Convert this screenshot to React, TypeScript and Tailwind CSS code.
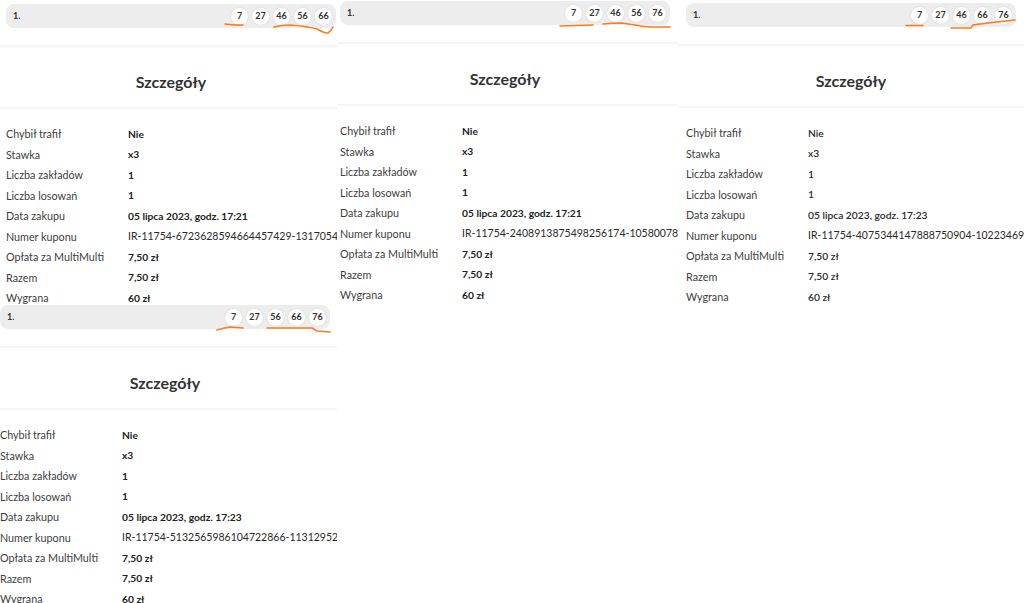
import React from 'react';

type PanelProps = {
  top: number;
  left: number;
  balls: number[];
  date: string;
  coupon: string;
  light?: boolean;
};

const font = { fontFamily: 'Lato, "Noto Sans", sans-serif' };

const Ball: React.FC<{ n: number }> = ({ n }) => (
  <div className="flex h-[17px] w-[17px] items-center justify-center rounded-full bg-white text-[9px] font-bold text-[#333] shadow-[0_0_2px_rgba(0,0,0,0.12)]">
    {n}
  </div>
);

const Panel: React.FC<PanelProps> = ({ top, left, balls, date, coupon, light }) => {
  const rows: [string, string, boolean][] = [
    ['Chybił trafił', 'Nie', true],
    ['Stawka', 'x3', true],
    ['Liczba zakładów', '1', true],
    ['Liczba losowań', '1', true],
    ['Data zakupu', date, true],
    ['Numer kuponu', coupon, false],
    ['Opłata za MultiMulti', '7,50 zł', true],
    ['Razem', '7,50 zł', true],
    ['Wygrana', '60 zł', true],
  ];

  return (
    <div className="overflow-hidden bg-white" style={{ paddingTop: top }}>
      <div style={{ marginLeft: left }} className="w-[330px]">
        <div className="flex h-[24px] items-center justify-between rounded-[8px] bg-[#ededed] pl-[7px] pr-[4px]">
          <span className="text-[9px] font-bold text-[#333]">1.</span>
          <div className="flex gap-[4px]">
            {balls.map((b) => (
              <Ball key={b} n={b} />
            ))}
          </div>
        </div>
      </div>

      <div className="mt-[17px] h-[4px] bg-gradient-to-b from-[#f1f1f1] to-white" />

      <div style={{ marginLeft: left }} className="w-[330px]">
        <div className="flex h-[58px] items-center justify-center pt-[8px] text-[16px] font-bold text-[#333]">
          Szczegóły
        </div>
      </div>

      <div className="h-[3px] bg-gradient-to-b from-[#f3f3f3] to-white" />

      <div style={{ marginLeft: left }} className="mt-[14px]">
        {rows.map(([label, value, bold]) => (
          <div key={label} className="flex h-[20.5px] items-center whitespace-nowrap">
            <div className="w-[122px] shrink-0 text-[10.75px] text-[#3d3d3d]">{label}</div>
            <div
              className={
                bold
                  ? light
                    ? 'text-[10.25px] font-semibold text-[#2a2a2a]'
                    : 'text-[10.25px] font-bold text-[#222]'
                  : 'text-[10.5px] text-[#2a2a2a]'
              }
            >
              {value}
            </div>
          </div>
        ))}
      </div>
    </div>
  );
};

export default function App() {
  return (
    <div className="relative h-[603px] w-[1024px] overflow-hidden bg-white" style={font}>
      <div className="grid h-full grid-cols-[337px_341px_346px] grid-rows-[305px_298px]">
        <Panel
          top={4}
          left={6}
          balls={[7, 27, 46, 56, 66]}
          date="05 lipca 2023, godz. 17:21"
          coupon="IR-11754-6723628594664457429-1317054"
        />
        <Panel
          top={1}
          left={3}
          balls={[7, 27, 46, 56, 76]}
          date="05 lipca 2023, godz. 17:21"
          coupon="IR-11754-2408913875498256174-10580078"
        />
        <Panel
          top={3}
          left={8}
          light
          balls={[7, 27, 46, 66, 76]}
          date="05 lipca 2023, godz. 17:23"
          coupon="IR-11754-4075344147888750904-102234696"
        />
        <Panel
          top={0}
          left={0}
          balls={[7, 27, 56, 66, 76]}
          date="05 lipca 2023, godz. 17:23"
          coupon="IR-11754-5132565986104722866-113129525"
        />
        <div className="col-span-2 bg-white" />
      </div>

      {/* hand-drawn marker lines over the drawn numbers */}
      <svg
        className="pointer-events-none absolute left-0 top-0"
        width={1024}
        height={603}
        fill="none"
        stroke="#ff7a1a"
        strokeWidth={1.6}
        strokeLinecap="round"
      >
        <path d="M225 24 Q234 25.5 243 25" />
        <path d="M274 27 Q282 25 290 25 Q305 26 317 29 Q322 32 326 33 L328 33 Q331 31 333 27" />
        <path d="M560 26 Q576 25.5 593 25" />
        <path d="M603 24 Q612 23 622 23 Q628 24 635 25 Q644 27 652 27 L670 27" />
        <path d="M906 25.5 L923 25.5" />
        <path d="M951 28 L971 28 Q972 26 973 25 Q980 24 988 23 Q996 22 1006 21 L1015 20" />
        <path d="M217 330 Q224 328 230 327 L243 328" />
        <path d="M267 328 L312 328 Q315 330 317 331 L330 332" />
      </svg>
    </div>
  );
}
